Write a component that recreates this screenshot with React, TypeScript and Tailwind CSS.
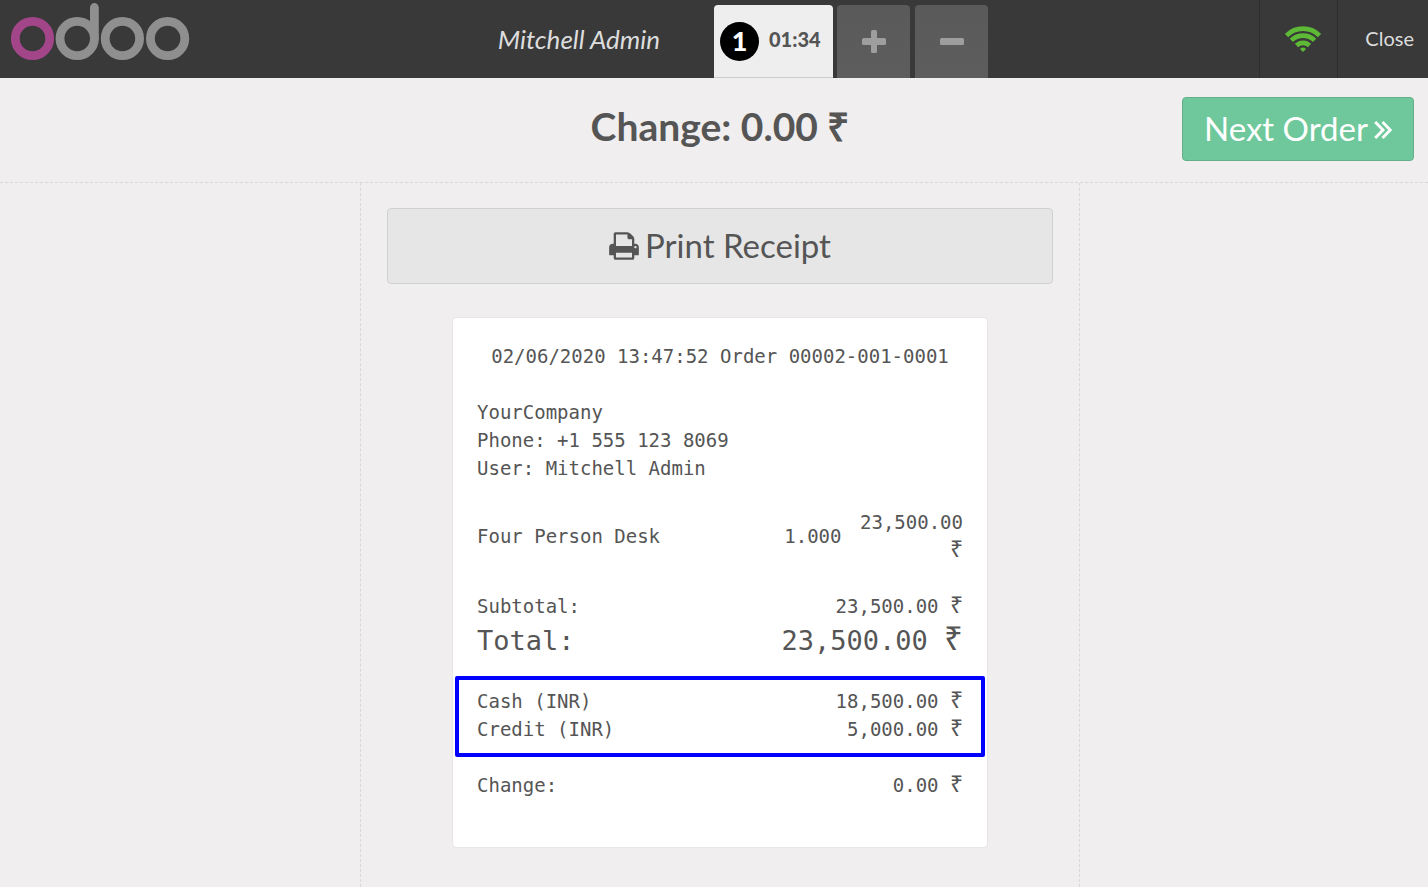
import type { ReactNode } from "react";

function OdooLogo() {
  return (
    <svg width="180" height="60" viewBox="10 2 180 60" fill="none" strokeWidth="8.8" role="img" aria-label="odoo">
      <g stroke="#8f8f8f">
        <circle cx="77.2" cy="38.5" r="17.2" />
        <circle cx="122.4" cy="38.5" r="17.2" />
        <circle cx="167.6" cy="38.5" r="17.2" />
        <path d="M94.4 38.500V7.500" strokeLinecap="round" />
      </g>
      <circle cx="32.5" cy="38.5" r="17.2" stroke="#a24689" />
    </svg>
  );
}

function WifiIcon() {
  return (
    <svg width="36" height="26" viewBox="0 0 36 26" fill="none" stroke="#5eb937" strokeWidth="4.7" aria-hidden="true">
      <path d="M1.5 9.500A23.300 23.300 0 0 1 34.500 9.500" />
      <path d="M6.400 14.400A16.400 16.400 0 0 1 29.600 14.400" />
      <path d="M11.500 19.500A9.200 9.200 0 0 1 24.500 19.500" />
      <path d="M18 26L15 23A4.300 4.300 0 0 1 21 23Z" fill="#5eb937" stroke="none" />
    </svg>
  );
}

function PrintIcon() {
  return (
    <svg width="30" height="32" viewBox="0 0 1664 1792" fill="currentColor" aria-hidden="true">
      <path d="M384 1536h896v-256H384v256zm0-640h896V512h-160q-40 0-68-28t-28-68V256H384v640zm1152 64q0-26-19-45t-45-19-45 19-19 45 19 45 45 19 45-19 19-45zm128 0v416q0 13-9.500 22.500t-22.500 9.500h-224v160q0 40-28 68t-68 28H352q-40 0-68-28t-28-68v-160H32q-13 0-22.500-9.500T0 1376V960q0-79 56.500-135.500T192 768h64V224q0-40 28-68t68-28h672q40 0 88 20t76 48l152 152q28 28 48 76t20 88v256h64q79 0 135.500 56.500T1664 960z" />
    </svg>
  );
}

function DoubleAngleIcon() {
  return (
    <svg width="18" height="20" viewBox="0 0 18 20" fill="none" stroke="currentColor" strokeWidth="2.9" className="mt-1" aria-hidden="true">
      <path d="M1.200 2L9 10L1.200 18M8.500 2L16.300 10L8.500 18" />
    </svg>
  );
}

function Rupee({ className = "" }: { className?: string }) {
  return <span className={`font-['Liberation_Serif',serif] leading-none ${className}`}>₹</span>;
}

function OrderTabButton({ label, children }: { label: string; children: ReactNode }) {
  return (
    <button
      aria-label={label}
      className="flex h-[73px] w-[73px] items-center justify-center rounded-t bg-gradient-to-b from-[#5a5a5a] to-[#5d5d5d] text-[#9e9e9e]"
    >
      <svg width="24" height="24" viewBox="0 0 24 24" fill="currentColor" aria-hidden="true">
        {children}
      </svg>
    </button>
  );
}

type Line = { label: string; amount: string; large?: boolean };

function AmountTable({ lines }: { lines: Line[] }) {
  return (
    <table className="w-full">
      <tbody>
        {lines.map((line) => (
          <tr key={line.label} className={line.large ? "text-[27px] leading-[42px]" : ""}>
            <td className="p-0">{line.label}</td>
            <td className="p-0 text-right">
              {line.amount} <Rupee className={line.large ? "text-[33px]" : "text-[23px]"} />
            </td>
          </tr>
        ))}
      </tbody>
    </table>
  );
}

export default function App() {
  return (
    <div className="flex min-h-screen flex-col bg-[#f0eeee] font-['Lato',sans-serif] text-[#555555]">
      <header className="flex h-[78px] bg-[#393939] text-[#dddddd]">
        <div className="flex w-[660px] shrink-0 items-start justify-between pt-0.5 pl-2.5">
          <OdooLogo />
          <span className="pt-5 text-[26px] leading-[34px] italic">Mitchell Admin</span>
        </div>
        <nav className="ml-[54px] flex items-end pt-[5px]">
          <button className="mr-1 flex h-[73px] w-[119px] items-center gap-2.5 rounded-t border-b border-[#cccccc] bg-[#eeeeee] pl-1.5 text-[#555555]">
            <span className="flex size-[39px] items-center justify-center rounded-full bg-black text-[27px] leading-8 font-black text-white">
              1
            </span>
            <span className="pb-1 text-[20px] leading-6 font-black">01:34</span>
          </button>
          <div className="flex gap-[5px]">
            <OrderTabButton label="New order">
              <rect x="0" y="8" width="24" height="7" rx="1.500" />
              <rect x="9" y="0" width="6" height="23" rx="1.500" />
            </OrderTabButton>
            <OrderTabButton label="Delete order">
              <rect x="0" y="8" width="24" height="7" rx="1.500" />
            </OrderTabButton>
          </div>
        </nav>
        <div className="ml-auto flex">
          <div className="flex w-[78px] items-center justify-center border-l border-[#2e2e2e] pl-2">
            <WifiIcon />
          </div>
          <button className="border-l border-[#2e2e2e] pr-3.5 pb-0.5 pl-[27px] text-[20px] leading-6">Close</button>
        </div>
      </header>

      <div className="grid grid-cols-[1fr_auto_1fr] items-start border-b border-dashed border-[#d8d8d8] pt-[19px] pb-[21px]">
        <h1 className="col-start-2 pt-[5px] pl-3 text-[39px] leading-[48px] font-bold">
          Change: 0.00 <Rupee />
        </h1>
        <button className="mr-3.5 flex h-16 items-center gap-1.5 justify-self-end rounded border border-[#64af8a] bg-[#6ec89b] px-[21px] pb-0.5 text-[33px] leading-10 text-white">
          Next Order
          <DoubleAngleIcon />
        </button>
      </div>

      <main className="flex flex-1 justify-center pl-3">
        <div className="w-[720px] border-x border-dashed border-[#d8d8d8] px-[26px] pt-[25px] pb-[39px]">
          <button className="flex h-[76px] w-full items-center justify-center gap-1.5 rounded border border-[#cfd1d1] bg-[#e6e6e6] text-[33px] leading-10">
            <PrintIcon />
            <span className="pb-0.5">Print Receipt</span>
          </button>

          <section className="mx-auto mt-[33px] w-[536px] rounded border border-[#e6e6e6] bg-white px-6 pt-6 pb-12 font-['DejaVu_Sans_Mono',monospace] text-[19px] leading-7">
            <p className="text-center">02/06/2020 13:47:52 Order 00002-001-0001</p>
            <address className="mt-7 not-italic">
              YourCompany
              <br />
              Phone: +1 555 123 8069
              <br />
              User: Mitchell Admin
            </address>
            <table className="mt-[26px] w-full table-fixed">
              <tbody>
                <tr>
                  <td className="w-1/2 p-0">Four Person Desk</td>
                  <td className="w-1/4 p-0 text-right">1.000</td>
                  <td className="w-1/4 p-0 text-right">
                    23,500.00 <Rupee className="text-[23px]" />
                  </td>
                </tr>
              </tbody>
            </table>
            <div className="mt-7">
              <AmountTable
                lines={[
                  { label: "Subtotal:", amount: "23,500.00" },
                  { label: "Total:", amount: "23,500.00", large: true },
                ]}
              />
            </div>
            <div className="-mx-[22px] mt-3.5 rounded-xs border-4 border-[#0000ff] px-[18px] pt-[7px] pb-2.5">
              <AmountTable
                lines={[
                  { label: "Cash (INR)", amount: "18,500.00" },
                  { label: "Credit (INR)", amount: "5,000.00" },
                ]}
              />
            </div>
            <div className="mt-3.5">
              <AmountTable lines={[{ label: "Change:", amount: "0.00" }]} />
            </div>
          </section>
        </div>
      </main>
    </div>
  );
}
